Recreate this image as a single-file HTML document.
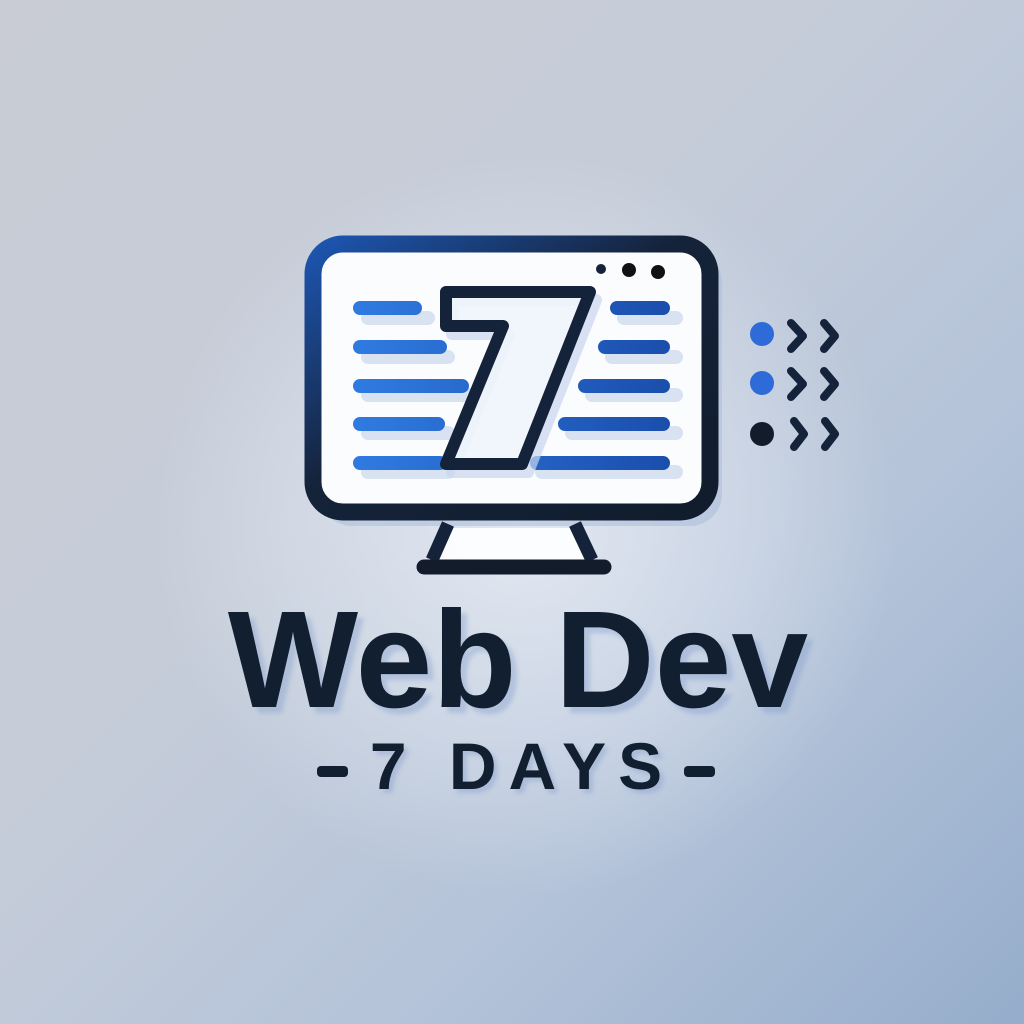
<!DOCTYPE html>
<html><head><style>
html,body{margin:0;padding:0}
body{width:1024px;height:1024px;overflow:hidden;position:relative;
background:linear-gradient(135deg,#c9ccd4 0%,#c6cdd9 40%,#b4c3d9 70%,#95adcb 100%);font-family:"Liberation Sans",sans-serif}
.glow{position:absolute;left:150px;top:150px;width:750px;height:750px;border-radius:50%;
background:radial-gradient(circle,rgba(235,240,248,.8) 0%,rgba(225,232,243,.4) 45%,rgba(220,228,240,0) 70%)}
.t1{position:absolute;left:6px;width:1024px;top:580px;text-align:center;font-weight:bold;font-size:138px;color:#121f30;line-height:160px;text-shadow:6px 6px 4px rgba(120,150,200,.35)}
.t2{position:absolute;left:4px;width:1024px;top:728px;text-align:center;font-weight:bold;font-size:66px;color:#121f30;letter-spacing:12px;line-height:76px;text-shadow:4px 4px 4px rgba(120,150,200,.35)}
.d{display:inline-block;width:31px;height:11px;background:#121f30;border-radius:4px;vertical-align:middle}
</style></head><body>
<div class="glow"></div>
<svg width="1024" height="1024" style="position:absolute;left:0;top:0">
<defs>
<linearGradient id="fr" x1="0" y1="0" x2="1" y2="1"><stop offset="0" stop-color="#1d55b0"/><stop offset=".45" stop-color="#15233a"/><stop offset="1" stop-color="#111c2c"/></linearGradient>
<linearGradient id="ln" x1="0" y1="0" x2="1" y2="0"><stop offset="0" stop-color="#2f7ae0"/><stop offset="1" stop-color="#1b4fae"/></linearGradient>
</defs>
<rect x="320" y="250" width="402" height="276" rx="32" fill="#aebfdc" opacity=".6"/>
<rect x="313" y="244" width="397" height="268" rx="30" fill="#fbfcfe" stroke="url(#fr)" stroke-width="17"/>
<g stroke="#c2d1ea" stroke-width="14" stroke-linecap="round" opacity=".6">
<path d="M368 318H428M368 357H448M368 395H472M368 433H448M368 472H448M624 318H676M612 357H676M592 395H676M572 433H676M542 472H676"/>
</g>
<g stroke="url(#ln)" stroke-width="14" stroke-linecap="round">
<path d="M360 308H415M360 347H440M360 386H462M360 424H438M360 463H440M617 308H663M605 347H663M585 386H663M565 424H663M537 463H663"/>
</g>
<path d="M452 300L596 300L528 472L452 472L509 334L452 334Z" fill="none" stroke="#c8d6ee" stroke-width="12" stroke-linejoin="round" opacity=".7"/>
<path d="M446 292L590 292L522 464L446 464L503 326L446 326Z" fill="rgba(240,245,252,.9)" stroke="#15233a" stroke-width="12" stroke-linejoin="round"/>
<circle cx="601" cy="269" r="5" fill="#15233a"/><circle cx="629" cy="270" r="7" fill="#111"/><circle cx="658" cy="272" r="7" fill="#111"/>
<path d="M445 528L580 528L596 566L428 566Z" fill="#fff" opacity=".9"/>
<path d="M448 524L432 560M575 524L592 560" stroke="#15233a" stroke-width="13"/>
<path d="M424 567H604" stroke="#121c2b" stroke-width="15" stroke-linecap="round"/>
<circle cx="762" cy="334" r="12" fill="#2e6ad8"/><circle cx="762" cy="383" r="12" fill="#2e6ad8"/><circle cx="762" cy="434" r="12" fill="#121c2b"/>
<g fill="none" stroke="#15233a" stroke-width="8" stroke-linecap="round" stroke-linejoin="round">
<path d="M791 323L803 336L791 349M824 323L835 336L824 349M791 371L803 384L791 397M824 371L835 384L824 397M794 421L804 434L794 447M825 421L835 434L825 447"/>
</g>
</svg>
<div class="t1">Web Dev</div>
<div class="t2"><span class="d" style="margin-right:22px"></span>7 DAYS<span class="d" style="margin-left:10px"></span></div>
</body></html>
